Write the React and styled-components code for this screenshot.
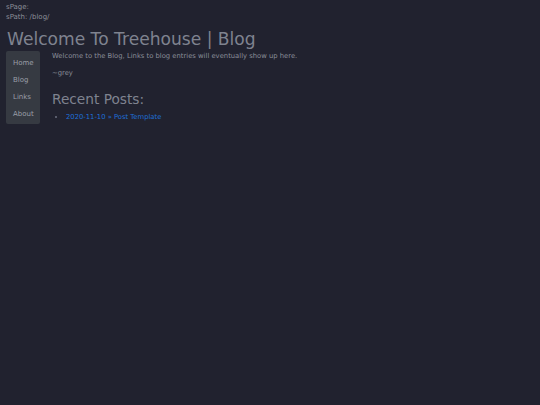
import React from 'react'
import styled, { createGlobalStyle } from 'styled-components'

const GlobalStyle = createGlobalStyle`
  html, body {
    margin: 0;
    padding: 0;
    background: #21222f;
  }
  body {
    font-family: "DejaVu Sans", sans-serif;
    color: #8a8e99;
    min-height: 405px;
  }
`

const Page = styled.div`
  padding: 2px 6px;
`

const Debug = styled.div`
  font-size: 7px;
  line-height: 10px;
  color: #8b8e97;
`

const Title = styled.h1`
  margin: 6px 0 0 1px;
  font-size: 17.1px;
  font-weight: 400;
  line-height: 22px;
  color: #7f838f;
`

const Body = styled.div`
  display: flex;
  align-items: flex-start;
  gap: 12px;
  margin-top: 1px;
`

const Nav = styled.nav`
  display: flex;
  flex-direction: column;
  background: #363a42;
  border-radius: 2px;
  padding: 4px 0 1px;
  width: 34px;
`

const NavLink = styled.a`
  display: block;
  padding: 0 0 0 7px;
  font-size: 7px;
  line-height: 17px;
  color: #9a9ea8;
  text-decoration: none;
`

const Main = styled.main`
  flex: 1;
  font-size: 6.8px;
  color: #8a8e99;
`

const Para = styled.p`
  margin: 0 0 7px;
  line-height: 10px;
`

const Heading = styled.h2`
  margin: 13px 0 4px;
  font-size: 13.7px;
  font-weight: 400;
  line-height: 17px;
  color: #7f838f;
`

const PostList = styled.ul`
  margin: 0;
  padding-left: 14px;
  li {
    line-height: 10px;
    color: #6c7180;
  }
  a {
    color: #1f6fd8;
    text-decoration: none;
  }
`

const navItems = ['Home', 'Blog', 'Links', 'About']

export default function App() {
  return (
    <Page>
      <GlobalStyle />
      <Debug>sPage:</Debug>
      <Debug>sPath: /blog/</Debug>
      <Title>Welcome To Treehouse | Blog</Title>
      <Body>
        <Nav>
          {navItems.map(item => (
            <NavLink key={item} href="#">{item}</NavLink>
          ))}
        </Nav>
        <Main>
          <Para>Welcome to the Blog, Links to blog entries will eventually show up here.</Para>
          <Para>~grey</Para>
          <Heading>Recent Posts:</Heading>
          <PostList>
            <li><a href="#">2020-11-10 » Post Template</a></li>
          </PostList>
        </Main>
      </Body>
    </Page>
  )
}
